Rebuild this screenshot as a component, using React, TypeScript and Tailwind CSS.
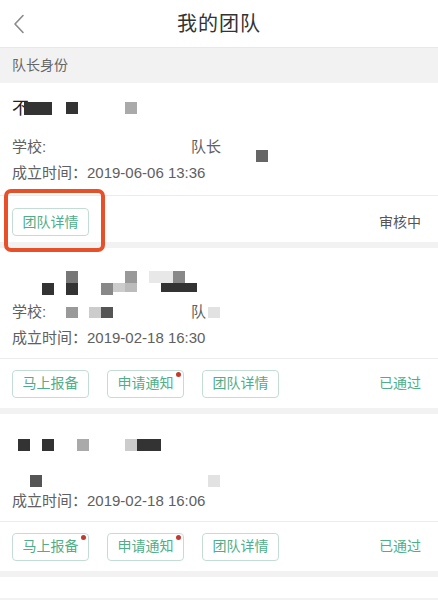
import React from "react";

type Block = { x: number; y: number; w: number; h: number; c: string };

const font = { fontFamily: '"Liberation Sans", "Noto Sans CJK SC", sans-serif' };

function Mosaic({ blocks, h }: { blocks: Block[]; h: number }) {
  return (
    <div className="relative" style={{ height: h }}>
      {blocks.map((b, i) => (
        <span
          key={i}
          className="absolute block"
          style={{ left: b.x, top: b.y, width: b.w, height: b.h, background: b.c }}
        />
      ))}
    </div>
  );
}

function Btn({ label, dot }: { label: string; dot?: boolean }) {
  return (
    <div className="relative flex h-[28px] items-center rounded-[4px] border border-[#c4ddd3] px-[9.5px] text-[14px] text-[#4fae88]">
      {label}
      {dot && <span className="absolute right-[2px] top-[1px] h-[5px] w-[5px] rounded-full bg-[#c23a2e]" />}
    </div>
  );
}

function Sep() {
  return <div className="h-[6px] bg-[#f2f2f2]" />;
}

export default function App() {
  return (
    <div className="relative w-[438px] h-[600px] overflow-hidden bg-white text-[15px] text-[#606060]" style={font}>
      {/* header */}
      <div className="relative flex h-[48px] items-center justify-center border-b border-[#e8e8e8] bg-white">
        <svg className="absolute left-[12px] top-[14px]" width="14" height="20" viewBox="0 0 14 20">
          <polyline points="11,1.5 3,10 11,18.5" fill="none" stroke="#8a8a8a" strokeWidth="1.6" strokeLinecap="round" strokeLinejoin="round" />
        </svg>
        <span className="text-[20px] tracking-[1px] text-[#333]">我的团队</span>
      </div>

      {/* section title */}
      <div className="flex h-[35px] items-center bg-[#f2f2f2] pl-[12px] text-[14px] text-[#666]">队长身份</div>

      {/* card 1 */}
      <div className="bg-white">
        <div className="pl-[12px] pt-[13px] pb-[9px]">
          <div className="relative flex h-[26px] items-center">
            <span className="text-[17px] text-[#222]">不</span>
            <span className="absolute left-[12px] top-[6px] h-[13px] w-[28px] bg-[#333]" />
            <span className="absolute left-[54px] top-[6px] h-[12px] w-[12px] bg-[#333]" />
            <span className="absolute left-[113px] top-[6px] h-[12px] w-[12px] bg-[#aaa]" />
          </div>
          <div className="mt-[12px] relative flex h-[26px] items-center">
            <span>学校:</span>
            <span className="absolute left-[179px]">队长</span>
            <span className="absolute left-[244px] top-[16px] h-[12px] w-[12px] bg-[#666]" />
          </div>
          <div className="flex h-[26px] items-center">成立时间：2019-06-06 13:36</div>
        </div>
        <div className="h-px bg-[#ececec]" />
        <div className="flex h-[46px] items-center justify-between pl-[12px] pr-[17px] pt-[6px]">
          <Btn label="团队详情" />
          <span className="text-[14px] text-[#555]">审核中</span>
        </div>
      </div>
      <Sep />

      {/* card 2 */}
      <div className="bg-white">
        <div className="pl-[12px] pt-[22px] pb-[7px]">
          <Mosaic
            h={26}
            blocks={[
              { x: 30, y: 13, w: 12, h: 12, c: "#333" },
              { x: 54, y: 1, w: 12, h: 12, c: "#777" },
              { x: 54, y: 13, w: 12, h: 12, c: "#333" },
              { x: 89, y: 13, w: 12, h: 12, c: "#888" },
              { x: 101, y: 13, w: 12, h: 9, c: "#ccc" },
              { x: 113, y: 1, w: 12, h: 12, c: "#999" },
              { x: 113, y: 13, w: 12, h: 9, c: "#bbb" },
              { x: 137, y: 1, w: 24, h: 12, c: "#e8e8e8" },
              { x: 161, y: 1, w: 12, h: 12, c: "#888" },
              { x: 149, y: 13, w: 36, h: 9, c: "#333" },
            ]}
          />
          <div className="mt-[3px] relative flex h-[26px] items-center">
            <span>学校:</span>
            <span className="absolute left-[54px] top-[8px] h-[11px] w-[12px] bg-[#999]" />
            <span className="absolute left-[77px] top-[8px] h-[11px] w-[12px] bg-[#ccc]" />
            <span className="absolute left-[89px] top-[8px] h-[11px] w-[12px] bg-[#555]" />
            <span className="absolute left-[179px]">队</span>
            <span className="absolute left-[196px] top-[8px] h-[11px] w-[12px] bg-[#e2e2e2]" />
          </div>
          <div className="flex h-[26px] items-center">成立时间：2019-02-18 16:30</div>
        </div>
        <div className="h-px bg-[#ececec]" />
        <div className="flex h-[49px] items-center justify-between pl-[12px] pr-[17px]">
          <div className="flex gap-[18px]">
            <Btn label="马上报备" />
            <Btn label="申请通知" dot />
            <Btn label="团队详情" />
          </div>
          <span className="text-[14px] text-[#4fae88]">已通过</span>
        </div>
      </div>
      <Sep />

      {/* card 3 */}
      <div className="bg-white">
        <div className="pl-[12px] pt-[18px] pb-[7px]">
          <Mosaic
            h={26}
            blocks={[
              { x: 6, y: 7, w: 12, h: 12, c: "#333" },
              { x: 30, y: 7, w: 12, h: 12, c: "#333" },
              { x: 65, y: 7, w: 12, h: 12, c: "#aaa" },
              { x: 113, y: 7, w: 12, h: 12, c: "#ccc" },
              { x: 125, y: 7, w: 24, h: 12, c: "#333" },
            ]}
          />
          <div className="mt-[4px]">
            <Mosaic
              h={26}
              blocks={[
                { x: 18, y: 13, w: 12, h: 12, c: "#555" },
                { x: 196, y: 13, w: 12, h: 12, c: "#e2e2e2" },
              ]}
            />
          </div>
          <div className="flex h-[26px] items-center">成立时间：2019-02-18 16:06</div>
        </div>
        <div className="h-px bg-[#ececec]" />
        <div className="flex h-[49px] items-center justify-between pl-[12px] pr-[17px]">
          <div className="flex gap-[18px]">
            <Btn label="马上报备" dot />
            <Btn label="申请通知" dot />
            <Btn label="团队详情" />
          </div>
          <span className="text-[14px] text-[#4fae88]">已通过</span>
        </div>
      </div>
      <Sep />
      <div className="h-[21px] bg-white" />
      <div className="h-[10px] bg-[#f2f2f2]" />

      {/* highlight overlay */}
      <div className="absolute left-[4px] top-[189px] h-[63px] w-[101px] rounded-[7px] border-[4px] border-[#e8502a]" />
    </div>
  );
}
